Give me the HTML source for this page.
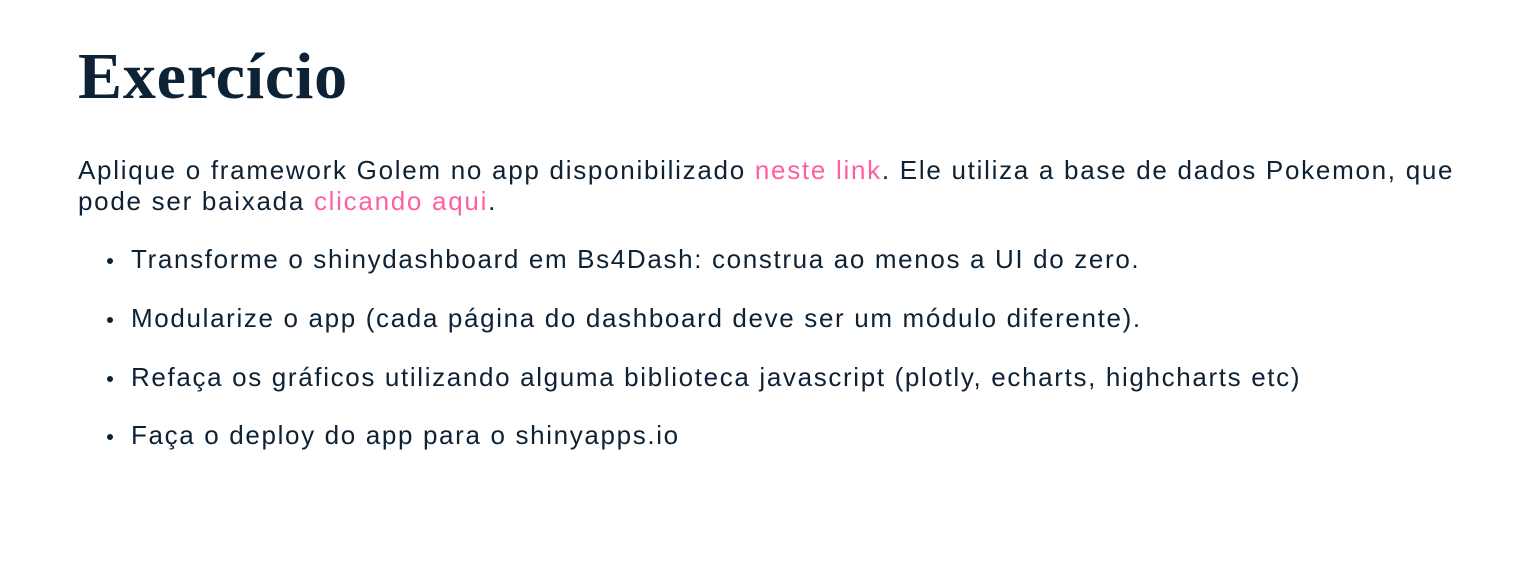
<!DOCTYPE html>
<html><head><meta charset="utf-8"><style>
html,body{margin:0;padding:0;background:#fff;width:1522px;height:580px;overflow:hidden}
body{font-family:"Liberation Sans",sans-serif;color:#0d2235}
h1{position:absolute;left:78px;top:39px;margin:0;font-family:"Liberation Serif",serif;font-weight:bold;font-size:66px;line-height:76px;letter-spacing:0.8px;color:#0d2235}
.p{position:absolute;left:78px;top:155px;font-size:26px;line-height:31px;letter-spacing:1.72px;white-space:nowrap}
a{color:#ff5fa2;text-decoration:none}
.li{position:absolute;left:131px;font-size:26px;line-height:31px;letter-spacing:1.65px;white-space:nowrap}
.li:before{content:"";position:absolute;left:-24px;top:14px;width:6px;height:6px;border-radius:50%;background:#0d2235}
</style></head><body>
<h1>Exercício</h1>
<div class="p">Aplique o framework Golem no app disponibilizado <a>neste link</a>. Ele utiliza a base de dados Pokemon, que<br>pode ser baixada <a>clicando aqui</a>.</div>
<div class="li" style="top:244px">Transforme o shinydashboard em Bs4Dash: construa ao menos a UI do zero.</div>
<div class="li" style="top:303px">Modularize o app (cada página do dashboard deve ser um módulo diferente).</div>
<div class="li" style="top:362px">Refaça os gráficos utilizando alguma biblioteca javascript (plotly, echarts, highcharts etc)</div>
<div class="li" style="top:420px">Faça o deploy do app para o shinyapps.io</div>
</body></html>
